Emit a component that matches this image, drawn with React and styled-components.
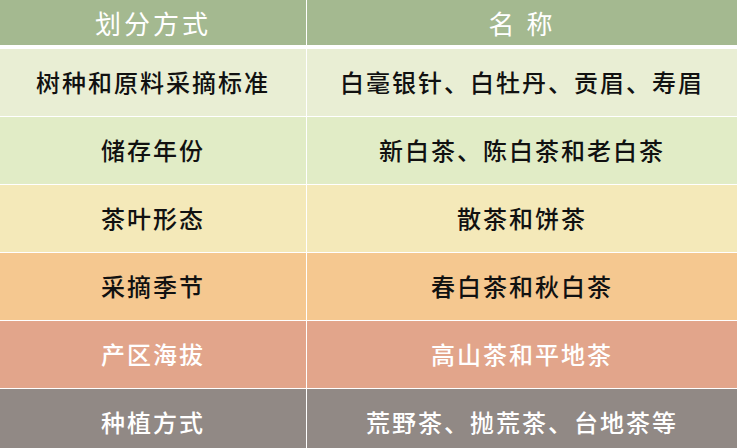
import React from "react";
import styled, { createGlobalStyle } from "styled-components";

const GlobalStyle = createGlobalStyle`
    html, body {
        margin: 0;
        padding: 0;
        background: #ffffff;
    }
    body {
        font-family: "Noto Sans CJK SC", "Noto Sans", sans-serif;
    }
`;

const Table = styled.div`
    width: 737px;
    height: 448px;
    overflow: hidden;
    background: #ffffff;
    display: flex;
    flex-direction: column;
`;

const Row = styled.div`
    display: grid;
    grid-template-columns: 306px 1fr;
    height: ${p => p.$height}px;
    flex: none;
    background: ${p => p.$bg};
    color: ${p => p.$color};
    margin-bottom: ${p => p.$gap}px;
`;

const Cell = styled.div`
    display: flex;
    align-items: center;
    justify-content: center;
    font-size: 24px;
    font-weight: 500;
    letter-spacing: 2px;
    line-height: 1;
    padding-bottom: 2px;

    & + & {
        border-left: 1px solid #ffffff;
    }
`;

const HeadCell = styled(Cell)`
    font-size: 26px;
    font-weight: 400;
    letter-spacing: 3px;
    color: #ffffff;
    padding-bottom: 0;
`;

const rows = [
    { kind: "树种和原料采摘标准", name: "白毫银针、白牡丹、贡眉、寿眉", bg: "#e9eed4", color: "#111111" },
    { kind: "储存年份", name: "新白茶、陈白茶和老白茶", bg: "#e1ecc6", color: "#111111" },
    { kind: "茶叶形态", name: "散茶和饼茶", bg: "#f4e9b9", color: "#111111" },
    { kind: "采摘季节", name: "春白茶和秋白茶", bg: "#f5c890", color: "#111111" },
    { kind: "产区海拔", name: "高山茶和平地茶", bg: "#e2a58b", color: "#ffffff" },
    { kind: "种植方式", name: "荒野茶、抛荒茶、台地茶等", bg: "#918985", color: "#ffffff" },
];

export default function App() {
    return (
        <>
            <GlobalStyle />
            <Table>
                <Row $height={45} $bg="#a4b990" $color="#ffffff" $gap={4}>
                    <HeadCell>划分方式</HeadCell>
                    <HeadCell>名 称</HeadCell>
                </Row>
                {rows.map(r => (
                    <Row key={r.kind} $height={67} $bg={r.bg} $color={r.color} $gap={1}>
                        <Cell>{r.kind}</Cell>
                        <Cell>{r.name}</Cell>
                    </Row>
                ))}
            </Table>
        </>
    );
}
